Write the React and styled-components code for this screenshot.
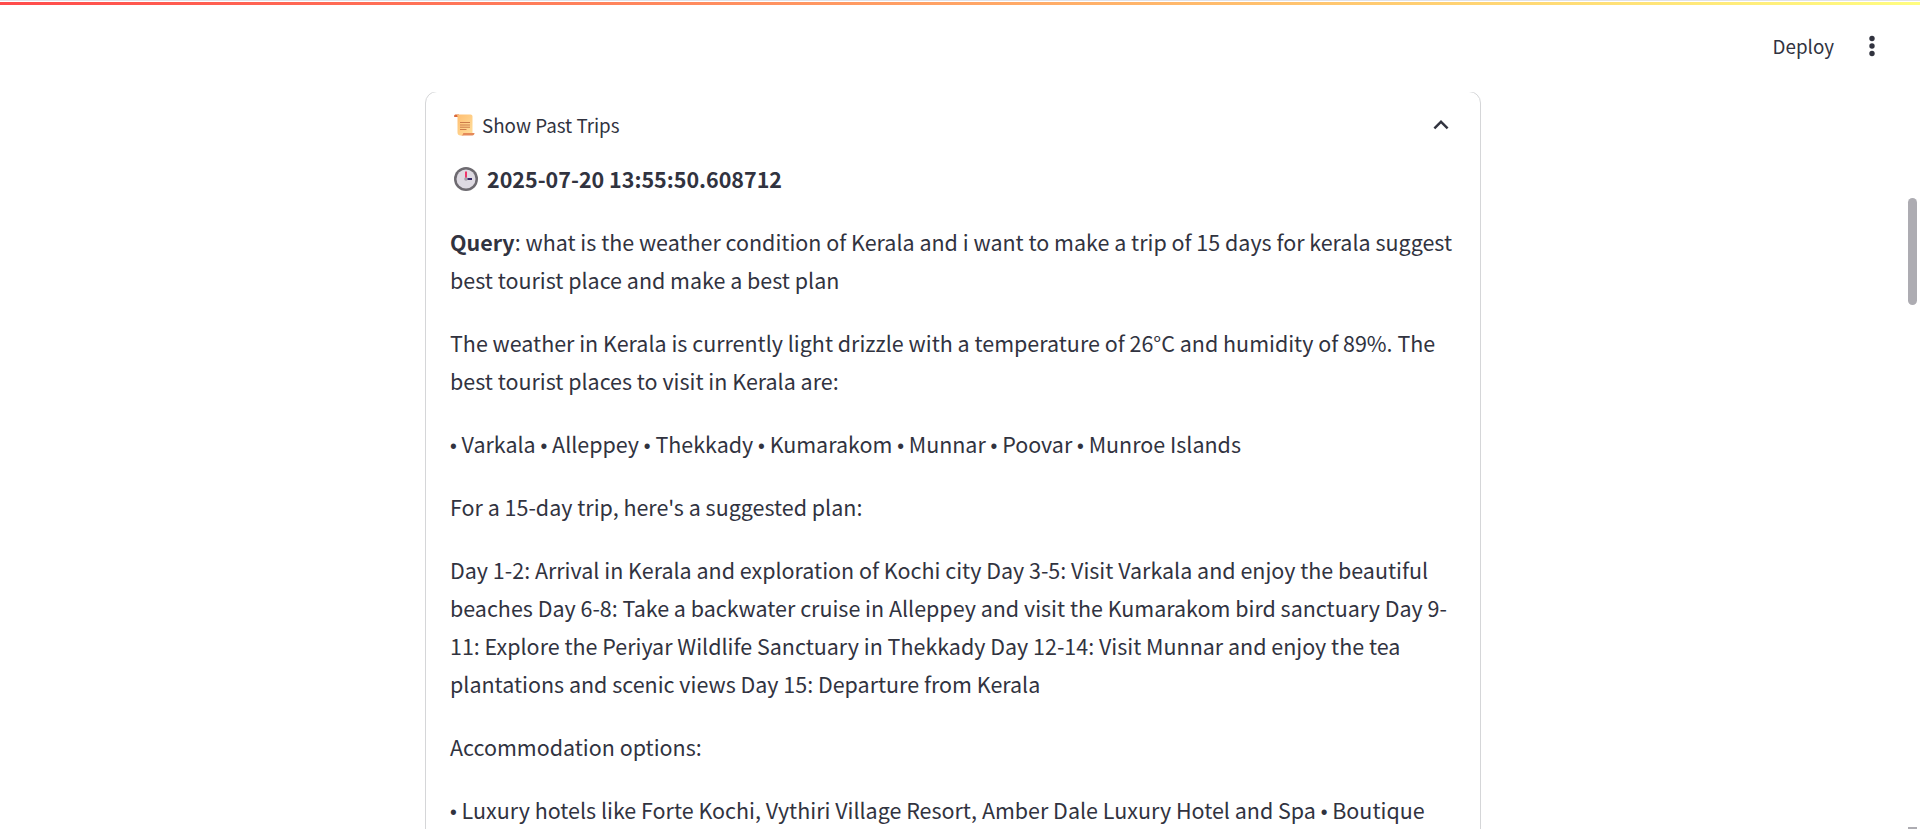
import React from "react";
import styled, { createGlobalStyle } from "styled-components";

const GlobalStyle = createGlobalStyle`
  * { box-sizing: border-box; }
  body {
    margin: 0;
    background: #ffffff;
    color: #31333f;
    font-family: "Source Sans Pro", "Noto Sans CJK SC", sans-serif;
    font-size: 24px;
    font-size-adjust: 0.486;
    line-height: 38px;
  }
`;

const Page = styled.div`
  position: relative;
  display: flex;
  flex-direction: column;
  height: 100vh;
  overflow: hidden;
  border-top: 1px solid #e0e2ea;
`;

const Decoration = styled.div`
  flex: none;
  height: 3px;
  margin-top: 1px;
  background: linear-gradient(90deg, #ff4b4b, #fffd80);
`;

const Header = styled.header`
  display: flex;
  flex: none;
  align-items: center;
  justify-content: flex-end;
  gap: 26px;
  height: 87px;
  padding: 0 36px 6px 24px;
`;

const ToolbarButton = styled.button`
  display: flex;
  align-items: center;
  padding: 0;
  border: 0;
  background: none;
  color: inherit;
  font: inherit;
  font-size: 21px;
  font-size-adjust: 0.486;
  line-height: 24px;
  cursor: pointer;
`;

const Main = styled.main`
  display: flex;
  flex: 1;
  justify-content: center;
  min-height: 0;
  overflow: hidden;
  padding: 0 38px 0 24px;
`;

const Card = styled.details`
  flex: 0 1 1056px;
  align-self: flex-start;
  margin-top: -1px;
  border: 1px solid #d5d6d8;
  border-radius: 12px;
`;

const Summary = styled.summary`
  display: flex;
  align-items: center;
  gap: 6px;
  padding: 16px 24px 12px 28px;
  font-size: 21px;
  line-height: 34px;
  list-style: none;
  cursor: pointer;
`;

const SummaryLabel = styled.span`
  flex: 1;
`;

const Body = styled.div`
  display: flex;
  flex-direction: column;
  gap: 25px;
  padding: 6px 24px 24px;
`;

const Timestamp = styled.div`
  display: flex;
  align-items: center;
  gap: 8px;
  padding-left: 3px;
  font-weight: 600;
`;

const Text = styled.p`
  margin: 0;
`;

const Strong = styled.strong`
  font-weight: 600;
`;

const Bullet = styled.span`
  font-family: "Liberation Sans", sans-serif;
  font-size: 21px;
  line-height: 1;
`;

const ScrollThumb = styled.div`
  position: absolute;
  top: 197px;
  right: 3px;
  width: 9px;
  height: 107px;
  border-radius: 5px;
  background: #adacb2;
`;

const ScrollEnd = styled.div`
  position: absolute;
  right: 3px;
  bottom: 0;
  width: 9px;
  height: 2px;
  background: #adacb2;
`;

const ScrollIcon = () => (
  <svg width="22" height="22" viewBox="0 0 22 22" aria-hidden="true">
    <defs>
      <linearGradient id="paper" x1="0" y1="0" x2="1" y2="1">
        <stop offset="0" stopColor="#ffbd70" />
        <stop offset="1" stopColor="#ffdf9c" />
      </linearGradient>
    </defs>
    <path d="M0 2.200C0 1 .8.500 2 .500h3v2.500H1.200C.4 3 0 2.800 0 2.200Z" fill="#d9693c" />
    <path d="M2 .500h14.500c1.200 0 2 .8 2 2v17h-9v2H6.500c-1.800 0-3-1.200-3-3V3C3.500 1.500 3 .7 2 .500Z" fill="url(#paper)" />
    <path d="M7 21.500c1.300-.2 2-1 2.300-2.500h11.200c0 1.600-.8 2.500-2.200 2.500Z" fill="#e58a59" />
    <path d="M6 8.500h10M6 11h10M6 13.200h10M6 15.500h6.500" stroke="#cb7c4b" strokeWidth="1" />
  </svg>
);

const ClockIcon = () => (
  <svg width="26" height="26" viewBox="0 0 26 26" aria-hidden="true">
    <circle cx="13" cy="13" r="12" fill="#6d6a70" />
    <circle cx="13" cy="13" r="9.500" fill="#dedae2" />
    <path d="M13 5.500V13" stroke="#f0356b" strokeWidth="2" />
    <path d="M13 13h6" stroke="#372a68" strokeWidth="2" />
    <circle cx="13" cy="13" r="1.800" fill="#a5a0aa" />
  </svg>
);

const ChevronUp = () => (
  <svg width="30" height="30" viewBox="0 0 24 24" aria-hidden="true">
    <path d="M12 8l-6 6 1.410 1.410L12 10.830l4.590 4.580L18 14z" fill="#31333f" />
  </svg>
);

const MoreIcon = () => (
  <svg width="24" height="24" viewBox="0 0 24 24" aria-hidden="true" fill="#31333f">
    <circle cx="12" cy="4.500" r="2.700" />
    <circle cx="12" cy="12" r="2.700" />
    <circle cx="12" cy="19.500" r="2.700" />
  </svg>
);

const paragraphs = [
  "The weather in Kerala is currently light drizzle with a temperature of 26°C and humidity of 89%. The best tourist places to visit in Kerala are:",
  "• Varkala • Alleppey • Thekkady • Kumarakom • Munnar • Poovar • Munroe Islands",
  "For a 15-day trip, here's a suggested plan:",
  "Day 1-2: Arrival in Kerala and exploration of Kochi city Day 3-5: Visit Varkala and enjoy the beautiful beaches Day 6-8: Take a backwater cruise in Alleppey and visit the Kumarakom bird sanctuary Day 9-11: Explore the Periyar Wildlife Sanctuary in Thekkady Day 12-14: Visit Munnar and enjoy the tea plantations and scenic views Day 15: Departure from Kerala",
  "Accommodation options:",
  "• Luxury hotels like Forte Kochi, Vythiri Village Resort, Amber Dale Luxury Hotel and Spa • Boutique",
];

const withBullets = (text) =>
  text.split(/(•)/).map((part, i) => (part === "•" ? <Bullet key={i}>•</Bullet> : part));

export default function App() {
  return (
    <Page>
      <GlobalStyle />
      <Decoration />
      <Header>
        <ToolbarButton type="button">Deploy</ToolbarButton>
        <ToolbarButton type="button" aria-label="Main menu">
          <MoreIcon />
        </ToolbarButton>
      </Header>
      <Main>
        <Card open>
          <Summary>
            <ScrollIcon />
            <SummaryLabel>Show Past Trips</SummaryLabel>
            <ChevronUp />
          </Summary>
          <Body>
            <Timestamp>
              <ClockIcon />
              2025-07-20 13:55:50.608712
            </Timestamp>
            <Text>
              <Strong>Query</Strong>: what is the weather condition of Kerala and i want to make a
              trip of 15 days for kerala suggest best tourist place and make a best plan
            </Text>
            {paragraphs.map((text) => (
              <Text key={text}>{withBullets(text)}</Text>
            ))}
          </Body>
        </Card>
      </Main>
      <ScrollThumb />
      <ScrollEnd />
    </Page>
  );
}
